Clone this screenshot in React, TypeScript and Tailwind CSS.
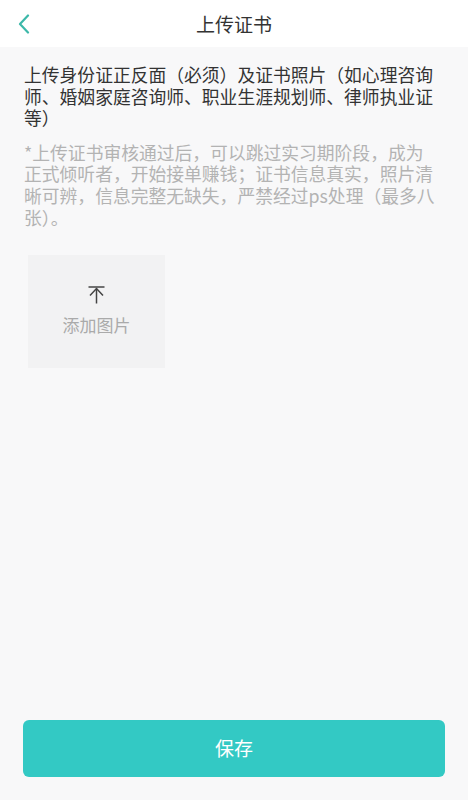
import React from 'react';

const FONT = { fontFamily: '"Noto Sans CJK SC", "Noto Sans", sans-serif' };

function UploadIcon() {
  return (
    <svg width="17" height="18" viewBox="0 0 17 18" fill="none" stroke="#444" strokeWidth="1.5">
      <path d="M0.5 1h16" />
      <path d="M8.5 2.5v15" />
      <path d="M2 9.5l6.5-7 6.5 7" />
    </svg>
  );
}

export default function App() {
  return (
    <div className="w-[468px] h-[800px] bg-[#f8f8f9] flex flex-col" style={FONT}>
      {/* Header */}
      <div className="h-[47px] bg-white flex items-center relative shrink-0">
        <button className="absolute left-[14px] top-[10px] p-1">
          <svg width="12" height="20" viewBox="0 0 12 20" fill="none" stroke="#3cb8a9" strokeWidth="2.2" strokeLinecap="round" strokeLinejoin="round">
            <path d="M10 1.5L2 10l8 8.5" />
          </svg>
        </button>
        <h1 className="flex-1 text-center text-[19px] text-[#333] leading-none">上传证书</h1>
      </div>

      {/* Content */}
      <div className="flex-1 flex flex-col pl-[24px] pt-[17px]">
        <p className="w-[412px] text-[17.8px] leading-[21.5px] text-[#333]">
          上传身份证正反面（必须）及证书照片（如心理咨询师、婚姻家庭咨询师、职业生涯规划师、律师执业证等）
        </p>
        <p className="w-[412px] mt-[13px] text-[17.8px] leading-[21.8px] text-[#b3b3b3]">
          *上传证书审核通过后，可以跳过实习期阶段，成为正式倾听者，开始接单赚钱；证书信息真实，照片清晰可辨，信息完整无缺失，严禁经过ps处理（最多八张）。
        </p>
        <div className="mt-[26px] ml-[4px] w-[137px] h-[113px] bg-[#f2f2f3] flex flex-col items-center justify-center">
          <div className="mt-[-4px]"><UploadIcon /></div>
          <span className="mt-[12px] text-[17px] leading-none text-[#aaaaaa]">添加图片</span>
        </div>
      </div>

      {/* Save button */}
      <div className="px-[23px] pb-[23px]">
        <button className="w-full h-[57px] rounded-[6px] bg-[#33c9c4] text-white text-[19px]">保存</button>
      </div>
    </div>
  );
}
